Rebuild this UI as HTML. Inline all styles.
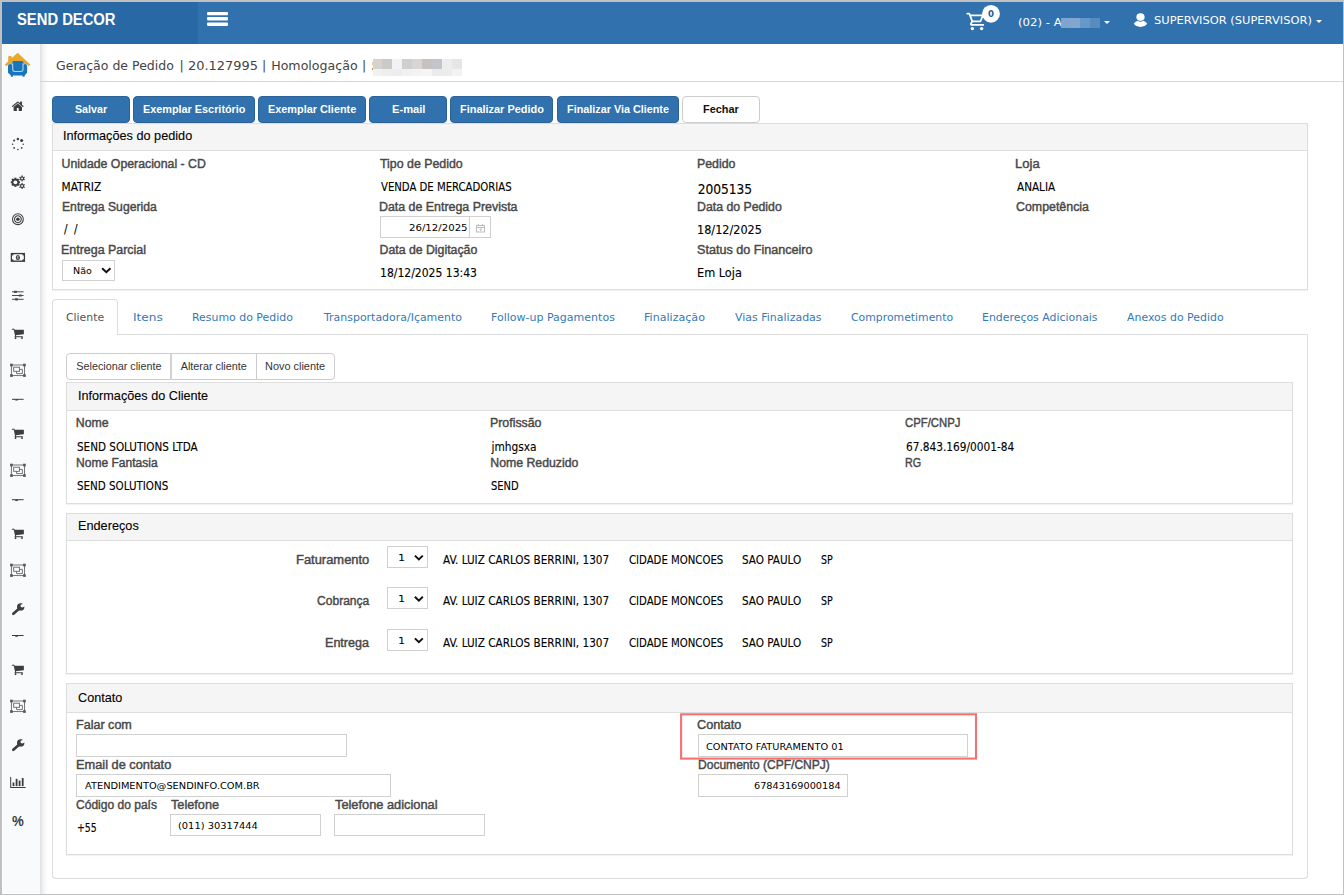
<!DOCTYPE html>
<html lang="pt-BR">
<head>
<meta charset="utf-8">
<title>Geração de Pedido</title>
<style>
html,body{margin:0;padding:0}
body{width:1344px;height:895px;position:relative;overflow:hidden;background:#c0c0c0;font-family:"Liberation Sans",sans-serif}
.a{position:absolute;box-sizing:border-box}
#page{left:2px;top:2px;width:1341px;height:892px;background:#fff}
#hdr{left:2px;top:2px;width:1341px;height:42px;background:#3071ae}
#logoarea{left:2px;top:2px;width:196px;height:42px;background:#2868a5}
#side{left:3px;top:44px;width:37px;height:849px;background:#f9fafb}
#sideshadow{left:40px;top:44px;width:8px;height:850px;background:linear-gradient(to right,rgba(0,0,0,.12),rgba(0,0,0,.05) 38%,rgba(0,0,0,0))}
.hl{background:#ddd;height:1px}
.bbx{top:96px;height:27px;border-radius:4px;background:#3071ae;border:1px solid #2a6299}
.bbw{top:96px;height:27px;border-radius:4px;background:#fff;border:1px solid #ccc}
.panel{border:1px solid #ddd;background:#fff;box-shadow:0 1px 1px rgba(0,0,0,.05)}
.phead{background:#f5f5f5;border-bottom:1px solid #ddd;left:0;top:0;right:0}
.ibx{border:1px solid #d0d0d0;background:#fff}
.t{position:absolute;white-space:nowrap;line-height:16px;transform-origin:0 0}
.lbl{font-family:"Liberation Sans", sans-serif;font-size:12.3px;font-weight:normal;color:#484848;-webkit-text-stroke:.42px #484848}
.val{font-family:"DejaVu Sans Condensed", "DejaVu Sans", sans-serif;font-size:11.8px;font-weight:normal;color:#000;font-stretch:condensed;-webkit-text-stroke:.12px #000}
.val14{font-family:"DejaVu Sans Condensed", "DejaVu Sans", sans-serif;font-size:13.6px;font-weight:normal;color:#000;font-stretch:condensed;-webkit-text-stroke:.12px #000}
.hd{font-family:"Liberation Sans", sans-serif;font-size:12.6px;font-weight:normal;color:#000;-webkit-text-stroke:.1px #000}
.btn{font-family:"Liberation Sans", sans-serif;font-size:10.8px;font-weight:bold;color:#fff}
.btnd{font-family:"Liberation Sans", sans-serif;font-size:10.8px;font-weight:bold;color:#111}
.btn2{font-family:"Liberation Sans", sans-serif;font-size:10.8px;font-weight:normal;color:#333}
.logo{font-family:"Liberation Sans", sans-serif;font-size:16px;font-weight:bold;color:#fff}
.ttl{font-family:"DejaVu Sans", sans-serif;font-size:12.6px;font-weight:normal;color:#444}
.nav{font-family:"DejaVu Sans", sans-serif;font-size:10.8px;font-weight:normal;color:#fff}
.tab{font-family:"DejaVu Sans", sans-serif;font-size:10.8px;font-weight:normal;color:#337ab7}
.taba{font-family:"DejaVu Sans", sans-serif;font-size:10.8px;font-weight:normal;color:#555}
.inp{font-family:"DejaVu Sans", sans-serif;font-size:9.1px;font-weight:normal;color:#000}
.pct{font-family:"Liberation Sans", sans-serif;font-size:15px;font-weight:bold;color:#3d3d3d}
.inp1{font-family:"DejaVu Sans", sans-serif;font-size:8.4px;font-weight:normal;color:#000}
.bdg{font-family:"DejaVu Sans", sans-serif;font-size:9.3px;font-weight:bold;color:#1f5c99}

</style>
</head>
<body>
<div id="page" class="a"></div>
<div id="hdr" class="a"></div>
<div id="logoarea" class="a"></div>
<div id="side" class="a"></div>
<div id="sideshadow" class="a"></div>

<!-- hamburger -->
<svg class="a" style="left:206px;top:10px" width="24" height="18" viewBox="0 0 24 18"><g fill="#fff"><rect x="1" y="1.9" width="21" height="3.3" rx=".8"/><rect x="1" y="7.1" width="21" height="3.3" rx=".8"/><rect x="1" y="12.5" width="21" height="3.4" rx=".8"/></g></svg>

<!-- cart -->
<svg class="a" style="left:960px;top:2px" width="44" height="32" viewBox="960 2 44 32"><g fill="none" stroke="#fff" stroke-width="1.8" stroke-linejoin="round" stroke-linecap="round"><path d="M967.300 13.700H969.300L972.300 21.400H980.400L983 15.300H970.500"/><path d="M972.300 21.400L971 23.500Q970.500 24.900 972.200 24.900H983.300"/></g><circle cx="972.400" cy="28.600" r="1.700" fill="#fff"/><circle cx="981.600" cy="28.600" r="1.700" fill="#fff"/><circle cx="991" cy="13.800" r="8.900" fill="#fff"/></svg>
<!-- blurred name -->
<div class="a" style="left:1061px;top:18px;width:9px;height:10px;z-index:3;background:#7ca6cf"></div>
<div class="a" style="left:1070px;top:18px;width:10px;height:10px;background:#82a7cf"></div>
<div class="a" style="left:1080px;top:18px;width:10px;height:10px;background:#6599c9"></div>
<div class="a" style="left:1090px;top:18px;width:10px;height:10px;background:#588bbe"></div>
<!-- carets -->
<div class="a" style="left:1104px;top:21px;width:0;height:0;border-left:3px solid transparent;border-right:3px solid transparent;border-top:3px solid #fff"></div>
<div class="a" style="left:1316px;top:20px;width:0;height:0;border-left:3px solid transparent;border-right:3px solid transparent;border-top:3px solid #fff"></div>
<!-- user -->
<svg class="a" style="left:1130px;top:10px" width="22" height="20" viewBox="1130 10 22 20"><g fill="#fff"><ellipse cx="1140.500" cy="17.100" rx="4.150" ry="3.800"/><path d="M1133.800 23.600Q1135.700 21.300 1137.600 20.800Q1140.500 22.700 1143.400 20.800Q1145.300 21.300 1147.200 23.600C1146 26 1143.500 26.900 1140.500 26.900C1137.500 26.900 1135 26 1133.800 23.600Z"/></g></svg>

<!-- title bar -->
<div class="a hl" style="left:40px;top:81px;width:1303px;background:#d6d6d6"></div>
<!-- blurred title piece -->
<div class="a" style="left:371.6px;top:62px;width:1.4px;height:2.6px;background:#f0c69c"></div><div class="a" style="left:371.6px;top:68px;width:1.4px;height:1.6px;background:#d89458"></div>
<div class="a" style="left:373px;top:59px;width:9px;height:10px;background:#d4d3d2"></div><div class="a" style="left:373px;top:69px;width:9px;height:7px;background:#f1f1ef"></div>
<div class="a" style="left:382px;top:59px;width:10px;height:10px;background:#cccac8"></div><div class="a" style="left:382px;top:69px;width:10px;height:7px;background:#eeeeee"></div>
<div class="a" style="left:392px;top:59px;width:10px;height:10px;background:#f1f2f6"></div><div class="a" style="left:392px;top:69px;width:10px;height:7px;background:#ededed"></div>
<div class="a" style="left:402px;top:59px;width:10px;height:10px;background:#cfcfcf"></div><div class="a" style="left:402px;top:69px;width:10px;height:7px;background:#f0f1f0"></div>
<div class="a" style="left:412px;top:59px;width:10px;height:10px;background:#d7d6d4"></div><div class="a" style="left:412px;top:69px;width:10px;height:7px;background:#f3f3f2"></div>
<div class="a" style="left:422px;top:59px;width:10px;height:10px;background:#c8c2be"></div><div class="a" style="left:422px;top:69px;width:10px;height:7px;background:#f5f5f3"></div>
<div class="a" style="left:432px;top:59px;width:10px;height:10px;background:#c2c6cb"></div><div class="a" style="left:432px;top:69px;width:10px;height:7px;background:#ebebeb"></div>
<div class="a" style="left:442px;top:59px;width:10px;height:10px;background:#ededed"></div><div class="a" style="left:442px;top:69px;width:10px;height:7px;background:#ececec"></div>
<div class="a" style="left:452px;top:59px;width:10px;height:10px;background:#e6e6e6"></div><div class="a" style="left:452px;top:69px;width:10px;height:7px;background:#f2f3f2"></div>

<!-- buttons -->
<div class="a bbx" style="left:52px;width:78px"></div>
<div class="a bbx" style="left:133px;width:122px"></div>
<div class="a bbx" style="left:258px;width:108px"></div>
<div class="a bbx" style="left:369px;width:78px"></div>
<div class="a bbx" style="left:450px;width:103px"></div>
<div class="a bbx" style="left:557px;width:122px"></div>
<div class="a bbw" style="left:682px;width:78px"></div>

<!-- panel 1 -->
<div class="a panel" style="left:52px;top:123px;width:1256px;height:167px"><div class="a phead" style="height:27px"></div></div>
<div class="a ibx" style="left:62px;top:260px;width:53px;height:21px"></div>
<div class="a ibx" style="left:380px;top:216px;width:90px;height:22px"></div>
<div class="a ibx" style="left:469px;top:216px;width:22px;height:22px"></div>

<!-- tabs -->
<div class="a hl" style="left:52px;top:334px;width:1256px"></div>
<div class="a" style="left:52px;top:334px;width:1256px;height:545px;border:1px solid #ddd;border-top:0;border-radius:0 0 4px 4px"></div>
<div class="a" style="left:52px;top:299px;width:66px;height:36px;border:1px solid #ddd;border-bottom:0;border-radius:4px 4px 0 0;background:#fff"></div>

<!-- button group -->
<div class="a" style="left:66px;top:353px;width:269px;height:27px;border:1px solid #ccc;border-radius:4px;background:#fff"></div>
<div class="a" style="left:170px;top:353px;width:2px;height:27px;background:#d2d2d2"></div>
<div class="a" style="left:256px;top:353px;width:1px;height:27px;background:#ccc"></div>

<!-- panel 2 -->
<div class="a panel" style="left:66px;top:382px;width:1227px;height:122px"><div class="a phead" style="height:28px"></div></div>
<!-- panel 3 -->
<div class="a panel" style="left:66px;top:513px;width:1227px;height:161px"><div class="a phead" style="height:27px"></div></div>
<div class="a ibx" style="left:387px;top:546px;width:41px;height:22px"></div>
<div class="a ibx" style="left:387px;top:587px;width:41px;height:22px"></div>
<div class="a ibx" style="left:387px;top:629px;width:41px;height:22px"></div>
<!-- panel 4 -->
<div class="a panel" style="left:66px;top:683px;width:1227px;height:172px"><div class="a phead" style="height:29px"></div></div>
<div class="a ibx" style="left:76px;top:734px;width:271px;height:23px"></div>
<div class="a ibx" style="left:76px;top:774px;width:315px;height:23px"></div>
<div class="a ibx" style="left:170px;top:814px;width:151px;height:22px"></div>
<div class="a ibx" style="left:334px;top:814px;width:151px;height:22px"></div>
<div class="a ibx" style="left:698px;top:734px;width:270px;height:23px"></div>
<div class="a ibx" style="left:698px;top:774px;width:150px;height:23px"></div>
<svg class="a" style="left:676px;top:709px" width="306" height="56" viewBox="676 709 306 56"><rect x="681.100" y="714.300" width="294.900" height="44.300" fill="none" stroke="#f47272" stroke-width="2.100"/></svg>

<svg class="a" style="left:0;top:0" width="46" height="895" viewBox="0 0 46 895">
<!-- logo -->
<g>
<path fill="#e9a92b" d="M17.6 52.7L30.300 64.500L28.900 66.300L26.300 64H9L6.400 66.300L4.900 64.500L8.200 61.400V57.100Q8.200 55.900 9.400 55.900H10.700Q11.800 55.900 11.800 57.100V58.100Z"/>
<path fill="#1b75bb" d="M12.300 62.600Q12.300 61 13.900 61H21.800Q23.400 61 23.400 62.600V65.300Q23.600 63.900 25.200 63.900Q27.100 63.900 27.100 66V72.700L24.600 75.600V76.800H22.600V75.600H12.900V76.800H10.900V75.600L8 72.700V66Q8 63.900 10 63.900Q12.100 63.900 12.300 65.300Z"/>
<path fill="none" stroke="#b4d4ee" stroke-width="1.1" d="M12.700 63.500V69.300Q12.700 71.500 14.900 71.500H20.800Q23 71.500 23 69.300V63.500"/>
</g>
<g fill="#3d3d3d">
<!-- home -->
<path transform="translate(11.75 99.74) scale(.007254)" d="M1408 992v480q0 26-19 45t-45 19h-384v-384h-256v384h-384q-26 0-45-19t-19-45v-480q0-1 .5-3t.5-3l575-474 575 474q1 2 1 6zm223-69l-62 74q-8 9-21 11h-3q-13 0-21-7l-692-577-692 577q-12 8-24 7-13-2-21-11l-62-74q-8-10-7-23.500t11-21.500l719-599q32-26 76-26t76 26l244 204v-195q0-14 9-23t23-9h192q14 0 23 9t9 23v408l219 182q10 8 11 21.500t-7 23.500z"/>
<!-- spinner -->
<g transform="translate(17.9 144.2)"><circle cx="0" cy="-5.300" r="1.250"/><circle cx="3.750" cy="-3.750" r="1.550"/><circle cx="5.300" cy="0" r=".75"/><circle cx="3.750" cy="3.750" r=".85"/><circle cx="0" cy="5.300" r=".8"/><circle cx="-3.750" cy="3.750" r=".9"/><circle cx="-5.300" cy="0" r=".8"/><circle cx="-3.750" cy="-3.750" r="1.050"/></g>
<!-- cogs -->
<g transform="translate(15.4 182.3)"><circle r="3.500"/><g><rect x="-1.050" y="-4.600" width="2.100" height="9.200"/><rect x="-1.050" y="-4.600" width="2.100" height="9.200" transform="rotate(45)"/><rect x="-1.050" y="-4.600" width="2.100" height="9.200" transform="rotate(90)"/><rect x="-1.050" y="-4.600" width="2.100" height="9.200" transform="rotate(135)"/></g><circle r="1.900" fill="#f9fafb"/></g>
<g transform="translate(22.1 178.4)"><circle r="2"/><rect x="-.6" y="-3" width="1.200" height="6"/><rect x="-.6" y="-3" width="1.200" height="6" transform="rotate(60)"/><rect x="-.6" y="-3" width="1.200" height="6" transform="rotate(120)"/><circle r=".95" fill="#f9fafb"/></g>
<g transform="translate(22.1 186)"><circle r="2"/><rect x="-.6" y="-3" width="1.200" height="6"/><rect x="-.6" y="-3" width="1.200" height="6" transform="rotate(60)"/><rect x="-.6" y="-3" width="1.200" height="6" transform="rotate(120)"/><circle r=".95" fill="#f9fafb"/></g>
<!-- bullseye -->
<g transform="translate(17.9 219.2)" fill="none" stroke="#3d3d3d"><circle r="5.400" stroke-width="1.050"/><circle r="3.400" stroke-width="1.050"/><circle r="1.800" fill="#3d3d3d" stroke="none"/></g>
<!-- money -->
<g><rect x="10.750" y="252.900" width="14.300" height="9"/><path fill="#f9fafb" d="M13.600 254.200H22.200Q22.200 255.600 23.800 255.600V259.200Q22.200 259.200 22.200 260.600H13.600Q13.600 259.200 12 259.200V255.600Q13.600 255.600 13.600 254.200Z"/><ellipse cx="17.900" cy="257.400" rx="2.100" ry="2.500"/><rect x="17.500" y="256" width=".8" height="2.800" fill="#f9fafb"/></g>
<!-- sliders -->
<g id="sl" fill="#4a4a4a"><rect x="12" y="291.300" width="11.600" height="1"/><rect x="12" y="295" width="11.600" height="1"/><rect x="12" y="298.800" width="11.600" height="1"/><rect x="14" y="290.700" width="3" height="2.200" rx=".6"/><rect x="18.800" y="294.400" width="3" height="2.200" rx=".6"/><rect x="15" y="298.200" width="3" height="2.200" rx=".6"/></g>
<!-- carts -->
<path id="cart" transform="translate(11.8 326.94) scale(.007254)" d="M640 1536q0 52-38 90t-90 38-90-38-38-90 38-90 90-38 90 38 38 90zm896 0q0 52-38 90t-90 38-90-38-38-90 38-90 90-38 90 38 38 90zm128-1088v512q0 24-16.500 42.500t-40.500 21.500l-1044 122q13 60 13 70 0 16-24 64h920q26 0 45 19t19 45-19 45-45 19h-1024q-26 0-45-19t-19-45q0-11 8-31.500t16-36 21.500-40 15.500-29.500l-177-823h-204q-26 0-45-19t-19-45 19-45 45-19h256q16 0 28.500 6.500t19.500 15.500 13 24.500 8 26 5.500 29.500 4.500 26h1201q26 0 45 19t19 45z"/>
<g transform="translate(0 100)"><path transform="translate(11.8 326.94) scale(.007254)" d="M640 1536q0 52-38 90t-90 38-90-38-38-90 38-90 90-38 90 38 38 90zm896 0q0 52-38 90t-90 38-90-38-38-90 38-90 90-38 90 38 38 90zm128-1088v512q0 24-16.500 42.500t-40.500 21.500l-1044 122q13 60 13 70 0 16-24 64h920q26 0 45 19t19 45-19 45-45 19h-1024q-26 0-45-19t-19-45q0-11 8-31.500t16-36 21.500-40 15.500-29.500l-177-823h-204q-26 0-45-19t-19-45 19-45 45-19h256q16 0 28.500 6.500t19.500 15.500 13 24.500 8 26 5.500 29.500 4.500 26h1201q26 0 45 19t19 45z"/></g><g transform="translate(0 200)"><path transform="translate(11.8 326.94) scale(.007254)" d="M640 1536q0 52-38 90t-90 38-90-38-38-90 38-90 90-38 90 38 38 90zm896 0q0 52-38 90t-90 38-90-38-38-90 38-90 90-38 90 38 38 90zm128-1088v512q0 24-16.500 42.500t-40.500 21.500l-1044 122q13 60 13 70 0 16-24 64h920q26 0 45 19t19 45-19 45-45 19h-1024q-26 0-45-19t-19-45q0-11 8-31.500t16-36 21.500-40 15.500-29.500l-177-823h-204q-26 0-45-19t-19-45 19-45 45-19h256q16 0 28.500 6.500t19.500 15.500 13 24.500 8 26 5.500 29.500 4.500 26h1201q26 0 45 19t19 45z"/></g><g transform="translate(0 336)"><path transform="translate(11.8 326.94) scale(.007254)" d="M640 1536q0 52-38 90t-90 38-90-38-38-90 38-90 90-38 90 38 38 90zm896 0q0 52-38 90t-90 38-90-38-38-90 38-90 90-38 90 38 38 90zm128-1088v512q0 24-16.500 42.500t-40.500 21.500l-1044 122q13 60 13 70 0 16-24 64h920q26 0 45 19t19 45-19 45-45 19h-1024q-26 0-45-19t-19-45q0-11 8-31.500t16-36 21.500-40 15.500-29.500l-177-823h-204q-26 0-45-19t-19-45 19-45 45-19h256q16 0 28.500 6.500t19.500 15.500 13 24.500 8 26 5.500 29.500 4.500 26h1201q26 0 45 19t19 45z"/></g>
<!-- object group -->
<g id="og" fill="none" stroke="#666" stroke-width=".9"><rect x="11.400" y="365" width="13.100" height="10.600"/><rect x="13.700" y="367.200" width="5.800" height="4.100"/><path d="M19.500 369.400H22.400V373.600H16.600V371.300"/><g fill="#5a5a5a" stroke="none"><rect x="10.100" y="363.700" width="2.700" height="2.700"/><rect x="23.100" y="363.700" width="2.700" height="2.700"/><rect x="10.100" y="374.200" width="2.700" height="2.700"/><rect x="23.100" y="374.200" width="2.700" height="2.700"/></g></g>
<g transform="translate(0 100)"><g fill="none" stroke="#666" stroke-width=".9"><rect x="11.400" y="365" width="13.100" height="10.600"/><rect x="13.700" y="367.200" width="5.800" height="4.100"/><path d="M19.500 369.400H22.400V373.600H16.600V371.300"/><g fill="#5a5a5a" stroke="none"><rect x="10.100" y="363.700" width="2.700" height="2.700"/><rect x="23.100" y="363.700" width="2.700" height="2.700"/><rect x="10.100" y="374.200" width="2.700" height="2.700"/><rect x="23.100" y="374.200" width="2.700" height="2.700"/></g></g></g><g transform="translate(0 200)"><g fill="none" stroke="#666" stroke-width=".9"><rect x="11.400" y="365" width="13.100" height="10.600"/><rect x="13.700" y="367.200" width="5.800" height="4.100"/><path d="M19.500 369.400H22.400V373.600H16.600V371.300"/><g fill="#5a5a5a" stroke="none"><rect x="10.100" y="363.700" width="2.700" height="2.700"/><rect x="23.100" y="363.700" width="2.700" height="2.700"/><rect x="10.100" y="374.200" width="2.700" height="2.700"/><rect x="23.100" y="374.200" width="2.700" height="2.700"/></g></g></g><g transform="translate(0 336)"><g fill="none" stroke="#666" stroke-width=".9"><rect x="11.400" y="365" width="13.100" height="10.600"/><rect x="13.700" y="367.200" width="5.800" height="4.100"/><path d="M19.500 369.400H22.400V373.600H16.600V371.300"/><g fill="#5a5a5a" stroke="none"><rect x="10.100" y="363.700" width="2.700" height="2.700"/><rect x="23.100" y="363.700" width="2.700" height="2.700"/><rect x="10.100" y="374.200" width="2.700" height="2.700"/><rect x="23.100" y="374.200" width="2.700" height="2.700"/></g></g></g>
<!-- minus-like -->
<g id="mn"><rect x="12" y="398.800" width="11.600" height="1"/><rect x="15.200" y="399.300" width="2.600" height="1.200" rx=".5"/></g>
<g transform="translate(0 100.400)"><g><rect x="12" y="398.800" width="11.600" height="1"/><rect x="15.200" y="399.300" width="2.600" height="1.200" rx=".5"/></g></g><g transform="translate(0 236.200)"><g><rect x="12" y="398.800" width="11.600" height="1"/><rect x="15.200" y="399.300" width="2.600" height="1.200" rx=".5"/></g></g>
<!-- wrench -->
<g id="wr"><path d="M13.300 613.700L19.300 608.500" stroke="#3d3d3d" stroke-width="2.700" stroke-linecap="round" fill="none"/><circle cx="20.700" cy="606.900" r="3.700"/><path fill="#f9fafb" d="M21.300 606.400L23.400 602.500L26 602.500L26 605.600L22.700 607.500Z"/><circle cx="22" cy="605.800" r="1.550" fill="#f9fafb"/></g>
<g transform="translate(0 136)"><g><path d="M13.300 613.700L19.300 608.500" stroke="#3d3d3d" stroke-width="2.700" stroke-linecap="round" fill="none"/><circle cx="20.700" cy="606.900" r="3.700"/><path fill="#f9fafb" d="M21.300 606.400L23.400 602.500L26 602.500L26 605.600L22.700 607.500Z"/><circle cx="22" cy="605.800" r="1.550" fill="#f9fafb"/></g></g>
<!-- bar chart -->
<g><path d="M10.200 777H11.200V786.900H25.700V787.900H10.200Z"/><rect x="12.600" y="782.500" width="1.800" height="3.600"/><rect x="15.700" y="778.800" width="1.800" height="7.300"/><rect x="18.700" y="780.600" width="1.800" height="5.500"/><rect x="21.800" y="778" width="1.800" height="8.100"/></g>
</g>
</svg>
<!-- select chevrons -->
<svg class="a" style="left:0;top:0;pointer-events:none" width="1344" height="895" viewBox="0 0 1344 895" fill="none" stroke="#111" stroke-width="2"><path d="M102.100 268.200L106.300 272.200L110.500 268.200"/><path d="M414.900 555.600L418.850 559.400L422.800 555.600"/><path d="M414.900 596.800L418.850 600.600L422.800 596.800"/><path d="M414.900 638.400L418.850 642.200L422.800 638.400"/>
<g stroke="#bdbdbd" stroke-width="1"><rect x="476.500" y="225.500" width="8" height="6.500"/><path d="M476.500 227.500H484.500M478.500 224V226M482.500 224V226M479.500 229H481.500L480.300 231" /></g></svg>

<span class="t logo" style="left:16.77px;top:12.00px;transform:scaleX(0.9234)">SEND DECOR</span>
<span class="t bdg" style="left:987.83px;top:5.80px;transform:scaleX(0.9204)">0</span>
<span class="t nav" style="left:1017.52px;top:15.00px;transform:scaleX(1.0882)">(02) - A</span>
<span class="t nav" style="left:1153.56px;top:13.00px;transform:scaleX(1.0616)">SUPERVISOR (SUPERVISOR)</span>
<span class="t ttl" style="left:56.30px;top:58.00px;transform:scaleX(0.9942)">Geração de Pedido</span>
<span class="t ttl" style="left:179.60px;top:58.00px">|</span>
<span class="t ttl" style="left:188.07px;top:58.00px;transform:scaleX(1.0292)">20.127995</span>
<span class="t ttl" style="left:262.00px;top:58.00px">|</span>
<span class="t ttl" style="left:271.20px;top:58.00px">Homologação</span>
<span class="t ttl" style="left:362.00px;top:58.00px">|</span>
<span class="t hd" style="left:63.44px;top:128.00px;transform:scaleX(1.0085)">Informações do pedido</span>
<span class="t lbl" style="left:61.60px;top:156.00px">Unidade Operacional - CD</span>
<span class="t val" style="left:61.50px;top:179.00px">MATRIZ</span>
<span class="t lbl" style="left:61.51px;top:199.00px;transform:scaleX(0.9895)">Entrega Sugerida</span>
<span class="t val" style="left:63.90px;top:221.00px;transform:scaleX(0.9829)">/</span>
<span class="t val" style="left:73.70px;top:221.00px;transform:scaleX(0.9829)">/</span>
<span class="t lbl" style="left:61.49px;top:242.00px;transform:scaleX(1.0114)">Entrega Parcial</span>
<span class="t lbl" style="left:380.25px;top:156.00px;transform:scaleX(1.0056)">Tipo de Pedido</span>
<span class="t val" style="left:380.95px;top:179.00px;transform:scaleX(0.9525)">VENDA DE MERCADORIAS</span>
<span class="t lbl" style="left:379.49px;top:199.00px;transform:scaleX(1.0078)">Data de Entrega Prevista</span>
<span class="t lbl" style="left:379.50px;top:242.00px">Data de Digitação</span>
<span class="t val" style="left:379.83px;top:264.50px;transform:scaleX(1.0195)">18/12/2025 13:43</span>
<span class="t lbl" style="left:696.99px;top:156.00px;transform:scaleX(1.0052)">Pedido</span>
<span class="t val14" style="left:697.65px;top:181.00px">2005135</span>
<span class="t lbl" style="left:697.00px;top:199.00px">Data do Pedido</span>
<span class="t val" style="left:697.28px;top:222.00px;transform:scaleX(1.0613)">18/12/2025</span>
<span class="t lbl" style="left:697.44px;top:242.00px;transform:scaleX(1.0244)">Status do Financeiro</span>
<span class="t val" style="left:697.43px;top:264.50px;transform:scaleX(1.0656)">Em Loja</span>
<span class="t lbl" style="left:1015.24px;top:156.00px;transform:scaleX(1.0600)">Loja</span>
<span class="t val" style="left:1016.95px;top:179.00px;transform:scaleX(0.9832)">ANALIA</span>
<span class="t lbl" style="left:1015.70px;top:199.00px;transform:scaleX(1.0072)">Competência</span>
<span class="t taba" style="left:66.15px;top:310.00px;transform:scaleX(1.0064)">Cliente</span>
<span class="t tab" style="left:133.32px;top:310.00px;transform:scaleX(1.1218)">Itens</span>
<span class="t tab" style="left:192.19px;top:310.00px;transform:scaleX(1.0120)">Resumo do Pedido</span>
<span class="t tab" style="left:324.05px;top:310.00px;transform:scaleX(1.0144)">Transportadora/Içamento</span>
<span class="t tab" style="left:490.93px;top:310.00px;transform:scaleX(1.0198)">Follow-up Pagamentos</span>
<span class="t tab" style="left:643.92px;top:310.00px;transform:scaleX(1.0271)">Finalização</span>
<span class="t tab" style="left:734.95px;top:310.00px;transform:scaleX(1.0174)">Vias Finalizadas</span>
<span class="t tab" style="left:851.40px;top:310.00px;transform:scaleX(1.0057)">Comprometimento</span>
<span class="t tab" style="left:981.94px;top:310.00px;transform:scaleX(1.0112)">Endereços Adicionais</span>
<span class="t tab" style="left:1126.95px;top:310.00px;transform:scaleX(1.0127)">Anexos do Pedido</span>
<span class="t hd" style="left:77.84px;top:388.00px;transform:scaleX(1.0050)">Informações do Cliente</span>
<span class="t lbl" style="left:75.75px;top:415.00px">Nome</span>
<span class="t val" style="left:76.81px;top:439.00px;transform:scaleX(0.9806)">SEND SOLUTIONS LTDA</span>
<span class="t lbl" style="left:75.77px;top:455.00px;transform:scaleX(0.9798)">Nome Fantasia</span>
<span class="t val" style="left:76.82px;top:478.00px;transform:scaleX(0.9732)">SEND SOLUTIONS</span>
<span class="t lbl" style="left:490.25px;top:415.00px;transform:scaleX(1.0044)">Profissão</span>
<span class="t val" style="left:491.45px;top:439.00px">jmhgsxa</span>
<span class="t lbl" style="left:490.25px;top:455.00px">Nome Reduzido</span>
<span class="t val" style="left:491.09px;top:478.00px;transform:scaleX(0.9385)">SEND</span>
<span class="t lbl" style="left:904.95px;top:415.00px;transform:scaleX(0.9209)">CPF/CNPJ</span>
<span class="t val" style="left:905.55px;top:439.00px;transform:scaleX(0.9959)">67.843.169/0001-84</span>
<span class="t lbl" style="left:904.62px;top:455.00px;transform:scaleX(0.8771)">RG</span>
<span class="t hd" style="left:77.99px;top:518.00px;transform:scaleX(1.0087)">Endereços</span>
<span class="t lbl" style="left:296.45px;top:552.00px;transform:scaleX(1.0514)">Faturamento</span>
<span class="t val" style="left:442.95px;top:552.00px;transform:scaleX(0.9860)">AV. LUIZ CARLOS BERRINI, 1307</span>
<span class="t val" style="left:628.67px;top:552.00px;transform:scaleX(0.9553)">CIDADE MONCOES</span>
<span class="t val" style="left:742.21px;top:552.00px;transform:scaleX(0.9829)">SAO PAULO</span>
<span class="t val" style="left:821.07px;top:552.00px;transform:scaleX(0.8932)">SP</span>
<span class="t lbl" style="left:316.91px;top:593.00px;transform:scaleX(0.9812)">Cobrança</span>
<span class="t val" style="left:442.95px;top:593.00px;transform:scaleX(0.9860)">AV. LUIZ CARLOS BERRINI, 1307</span>
<span class="t val" style="left:628.67px;top:593.00px;transform:scaleX(0.9553)">CIDADE MONCOES</span>
<span class="t val" style="left:742.21px;top:593.00px;transform:scaleX(0.9829)">SAO PAULO</span>
<span class="t val" style="left:821.07px;top:593.00px;transform:scaleX(0.8932)">SP</span>
<span class="t lbl" style="left:325.23px;top:635.00px;transform:scaleX(1.0216)">Entrega</span>
<span class="t val" style="left:442.95px;top:635.00px;transform:scaleX(0.9860)">AV. LUIZ CARLOS BERRINI, 1307</span>
<span class="t val" style="left:628.67px;top:635.00px;transform:scaleX(0.9553)">CIDADE MONCOES</span>
<span class="t val" style="left:742.21px;top:635.00px;transform:scaleX(0.9829)">SAO PAULO</span>
<span class="t val" style="left:821.07px;top:635.00px;transform:scaleX(0.8932)">SP</span>
<span class="t hd" style="left:78.40px;top:690.00px;transform:scaleX(1.0041)">Contato</span>
<span class="t lbl" style="left:75.73px;top:716.50px;transform:scaleX(1.0212)">Falar com</span>
<span class="t lbl" style="left:75.71px;top:757.00px;transform:scaleX(1.0402)">Email de contato</span>
<span class="t lbl" style="left:76.16px;top:797.00px;transform:scaleX(0.9787)">Código do país</span>
<span class="t lbl" style="left:170.99px;top:797.00px;transform:scaleX(1.0336)">Telefone</span>
<span class="t lbl" style="left:334.84px;top:797.00px;transform:scaleX(1.0417)">Telefone adicional</span>
<span class="t val" style="left:76.53px;top:819.50px;transform:scaleX(0.8824)">+55</span>
<span class="t lbl" style="left:697.38px;top:716.50px;transform:scaleX(1.0300)">Contato</span>
<span class="t lbl" style="left:697.72px;top:757.00px;transform:scaleX(0.9797)">Documento (CPF/CNPJ)</span>
<span class="t btn" style="left:75.10px;top:101.00px;transform:scaleX(0.9883)">Salvar</span>
<span class="t btn" style="left:142.90px;top:101.00px;transform:scaleX(1.0045)">Exemplar Escritório</span>
<span class="t btn" style="left:268.29px;top:101.00px;transform:scaleX(1.0072)">Exemplar Cliente</span>
<span class="t btn" style="left:392.03px;top:101.00px;transform:scaleX(1.0304)">E-mail</span>
<span class="t btn" style="left:459.89px;top:101.00px;transform:scaleX(1.0133)">Finalizar Pedido</span>
<span class="t btn" style="left:567.10px;top:101.00px">Finalizar Via Cliente</span>
<span class="t btnd" style="left:702.99px;top:101.00px;transform:scaleX(1.0126)">Fechar</span>
<span class="t btn2" style="left:76.30px;top:357.50px">Selecionar cliente</span>
<span class="t btn2" style="left:180.75px;top:357.50px">Alterar cliente</span>
<span class="t btn2" style="left:265.37px;top:357.50px;transform:scaleX(1.0107)">Novo cliente</span>
<span class="t inp" style="left:409.27px;top:220.25px;transform:scaleX(1.1174)">26/12/2025</span>
<span class="t inp" style="left:73.01px;top:262.75px;transform:scaleX(1.0521)">Não</span>
<span class="t inp1" style="left:397.78px;top:549.80px;transform:scaleX(1.3514)">1</span>
<span class="t inp1" style="left:397.78px;top:591.10px;transform:scaleX(1.3514)">1</span>
<span class="t inp1" style="left:397.78px;top:632.80px;transform:scaleX(1.3514)">1</span>
<span class="t inp" style="left:84.95px;top:778.25px;transform:scaleX(1.0781)">ATENDIMENTO@SENDINFO.COM.BR</span>
<span class="t inp" style="left:178.49px;top:817.90px;transform:scaleX(1.0837)">(011) 30317444</span>
<span class="t inp" style="left:705.71px;top:739.00px;transform:scaleX(1.0738)">CONTATO FATURAMENTO 01</span>
<span class="t inp" style="left:753.86px;top:778.00px;transform:scaleX(1.0692)">67843169000184</span>
<span class="t pct" style="left:12.09px;top:813.00px;transform:scaleX(0.8844)">%</span>
</body>
</html>
